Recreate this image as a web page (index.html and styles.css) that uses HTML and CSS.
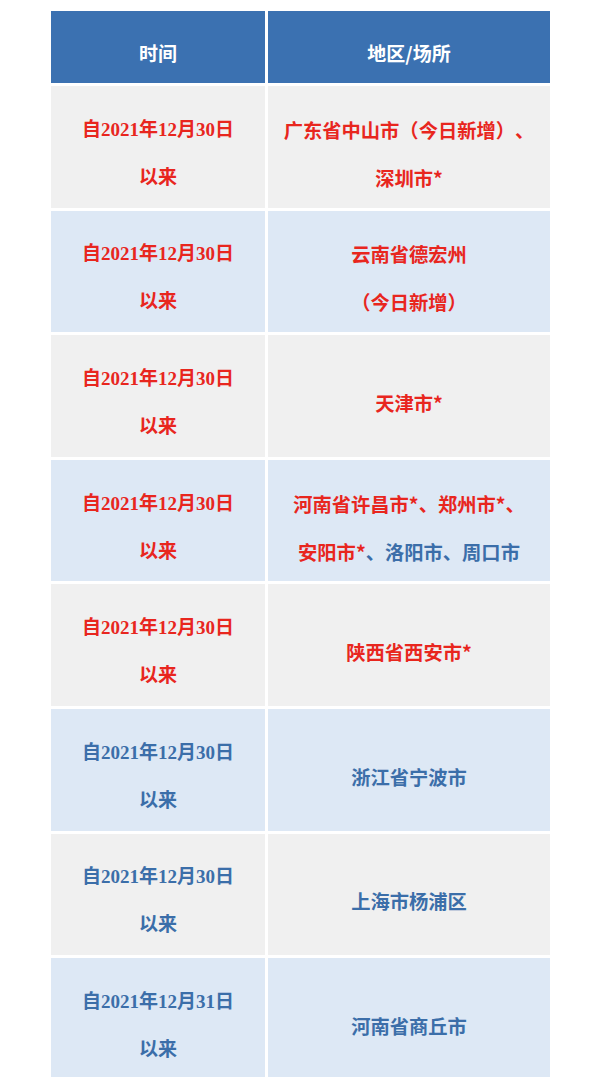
FILE: index.html
```html
<!DOCTYPE html>
<html lang="zh-CN">
<head>
<meta charset="utf-8">
<link rel="stylesheet" href="styles.css">
</head>
<body>
<div class="table">
  <div class="row head">
    <div class="cell"><div class="txt">时间</div></div>
    <div class="cell"><div class="txt">地区/场所</div></div>
  </div>
  <div class="row gray">
    <div class="cell red"><div class="txt">自2021年12月30日<br>以来</div></div>
    <div class="cell red"><div class="txt">广东省中山市（今日新增）、<br>深圳市*</div></div>
  </div>
  <div class="row blue">
    <div class="cell red"><div class="txt">自2021年12月30日<br>以来</div></div>
    <div class="cell red"><div class="txt">云南省德宏州<br>（今日新增）</div></div>
  </div>
  <div class="row gray">
    <div class="cell red"><div class="txt">自2021年12月30日<br>以来</div></div>
    <div class="cell red"><div class="txt">天津市*</div></div>
  </div>
  <div class="row blue">
    <div class="cell red"><div class="txt">自2021年12月30日<br>以来</div></div>
    <div class="cell red"><div class="txt">河南省许昌市*、郑州市*、<br>安阳市*<span class="bl">、洛阳市、周口市</span></div></div>
  </div>
  <div class="row gray">
    <div class="cell red"><div class="txt">自2021年12月30日<br>以来</div></div>
    <div class="cell red"><div class="txt">陕西省西安市*</div></div>
  </div>
  <div class="row blue">
    <div class="cell bl"><div class="txt">自2021年12月30日<br>以来</div></div>
    <div class="cell bl"><div class="txt">浙江省宁波市</div></div>
  </div>
  <div class="row gray">
    <div class="cell bl"><div class="txt">自2021年12月30日<br>以来</div></div>
    <div class="cell bl"><div class="txt">上海市杨浦区</div></div>
  </div>
  <div class="row blue">
    <div class="cell bl"><div class="txt">自2021年12月31日<br>以来</div></div>
    <div class="cell bl"><div class="txt">河南省商丘市</div></div>
  </div>
</div>
</body>
</html>
```

FILE: styles.css
```css
html, body {
  margin: 0;
  padding: 0;
  background: #ffffff;
}
body {
  width: 600px;
  height: 1077px;
  overflow: hidden;
}
.table {
  margin: 11px 0 0 51px;
  width: 499px;
  display: flex;
  flex-direction: column;
  gap: 3px;
}
.row {
  display: grid;
  grid-template-columns: 214px 282px;
  column-gap: 3px;
  height: 121.6px;
}
.row.head {
  height: 72px;
}
.cell {
  display: flex;
  align-items: center;
  justify-content: center;
  box-sizing: border-box;
  padding-top: 14px;
  font-family: "Liberation Serif", "Noto Sans CJK SC", sans-serif;
  font-weight: bold;
  font-size: 19px;
  line-height: 48px;
  white-space: nowrap;
  text-spacing-trim: space-all;
}
.txt {
  text-align: center;
}
.cell:nth-child(2) {
  font-family: "Noto Sans CJK SC", sans-serif;
  font-size: 19.3px;
}
.head .cell {
  background: #3b71b1;
  color: #ffffff;
  font-family: "Noto Sans CJK SC", sans-serif;
  font-size: 19px;
  padding-top: 12px;
}
.gray .cell {
  background: #f0f0f0;
}
.blue .cell {
  background: #dde8f5;
}
.red {
  color: #e8261e;
}
.bl {
  color: #3b6ea9;
}
```
